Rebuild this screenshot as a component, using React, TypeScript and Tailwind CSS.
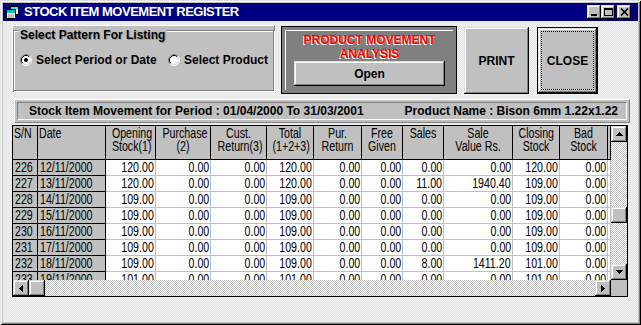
const bevel =
  'shadow-[inset_-1px_-1px_#000,inset_1px_1px_#dfdfdf,inset_-2px_-2px_#808080,inset_2px_2px_#fff]'
const track =
  'bg-[repeating-conic-gradient(#c0c0c0_0_25%,#ffffff_0_50%)] bg-[length:2px_2px]'

// column widths include the 1px right grid line
const COLS = [
  { w: 'w-[25px]', head: ['S/N'], left: true },
  { w: 'w-[68px]', head: ['Date'], left: true },
  { w: 'w-[50px]', head: ['Opening', 'Stock(1)'] },
  { w: 'w-[55px]', head: ['Purchase', '(2)'] },
  { w: 'w-[56px]', head: ['Cust.', 'Return(3)'] },
  { w: 'w-[47px]', head: ['Total', '(1+2+3)'] },
  { w: 'w-[48px]', head: ['Pur.', 'Return'] },
  { w: 'w-[41px]', head: ['Free', 'Given'] },
  { w: 'w-[41px]', head: ['Sales'] },
  { w: 'w-[69px]', head: ['Sale', 'Value Rs.'] },
  { w: 'w-[47px]', head: ['Closing', 'Stock'] },
  { w: 'w-[48px]', head: ['Bad', 'Stock'] },
  { w: 'w-[3px]', head: [] },
]

const ROWS = [
  ['226', '12/11/2000', '120.00', '0.00', '0.00', '120.00', '0.00', '0.00', '0.00', '0.00', '120.00', '0.00'],
  ['227', '13/11/2000', '120.00', '0.00', '0.00', '120.00', '0.00', '0.00', '11.00', '1940.40', '109.00', '0.00'],
  ['228', '14/11/2000', '109.00', '0.00', '0.00', '109.00', '0.00', '0.00', '0.00', '0.00', '109.00', '0.00'],
  ['229', '15/11/2000', '109.00', '0.00', '0.00', '109.00', '0.00', '0.00', '0.00', '0.00', '109.00', '0.00'],
  ['230', '16/11/2000', '109.00', '0.00', '0.00', '109.00', '0.00', '0.00', '0.00', '0.00', '109.00', '0.00'],
  ['231', '17/11/2000', '109.00', '0.00', '0.00', '109.00', '0.00', '0.00', '0.00', '0.00', '109.00', '0.00'],
  ['232', '18/11/2000', '109.00', '0.00', '0.00', '109.00', '0.00', '0.00', '8.00', '1411.20', '101.00', '0.00'],
  ['233', '19/11/2000', '101.00', '0.00', '0.00', '101.00', '0.00', '0.00', '0.00', '0.00', '101.00', '0.00'],
]

function Radio({ checked }: { checked?: boolean }) {
  return (
    <svg width="12" height="12" viewBox="0 0 12 12" className="shrink-0">
      <circle cx="6" cy="6" r="4.5" fill="#fff" />
      <path d="M2.11 9.89A5.5 5.5 0 0 1 9.89 2.11" fill="none" stroke="#808080" />
      <path d="M9.89 2.11A5.5 5.5 0 0 1 2.11 9.89" fill="none" stroke="#fff" />
      <path d="M2.82 9.18A4.5 4.5 0 0 1 9.18 2.82" fill="none" stroke="#000" />
      <path d="M9.18 2.82A4.5 4.5 0 0 1 2.82 9.18" fill="none" stroke="#dfdfdf" />
      {checked && <circle cx="6" cy="6" r="2" fill="#000" />}
    </svg>
  )
}

function Arrow({ dir }: { dir: 'up' | 'down' | 'left' | 'right' }) {
  const rects = {
    up: [[3, 0, 1, 1], [2, 1, 3, 1], [1, 2, 5, 1], [0, 3, 7, 1]],
    down: [[0, 0, 7, 1], [1, 1, 5, 1], [2, 2, 3, 1], [3, 3, 1, 1]],
    left: [[0, 3, 1, 1], [1, 2, 1, 3], [2, 1, 1, 5], [3, 0, 1, 7]],
    right: [[0, 0, 1, 7], [1, 1, 1, 5], [2, 2, 1, 3], [3, 3, 1, 1]],
  }[dir]
  const vertical = dir === 'up' || dir === 'down'
  return (
    <div className={`w-[16px] h-[16px] shrink-0 bg-[#c0c0c0] flex items-center justify-center ${bevel}`}>
      <svg width={vertical ? 7 : 4} height={vertical ? 4 : 7} shapeRendering="crispEdges">
        {rects.map((r, i) => (
          <rect key={i} x={r[0]} y={r[1]} width={r[2]} height={r[3]} fill="#000" />
        ))}
      </svg>
    </div>
  )
}

function TitleButton({ kind }: { kind: 'min' | 'max' | 'close' }) {
  return (
    <div className={`w-[14px] h-[14px] bg-[#c0c0c0] flex items-center justify-center ${bevel}`}>
      <svg width="9" height="8" viewBox="0 0 9 8" shapeRendering="crispEdges">
        {kind === 'min' && <rect x="1" y="6" width="6" height="2" fill="#000" />}
        {kind === 'max' && (
          <>
            <rect x="0" y="0" width="9" height="2" fill="#000" />
            <rect x="0" y="0" width="1" height="8" fill="#000" />
            <rect x="8" y="0" width="1" height="8" fill="#000" />
            <rect x="0" y="7" width="9" height="1" fill="#000" />
          </>
        )}
        {kind === 'close' && (
          <path d="M1 0.5L8 7.5M8 0.5L1 7.5" stroke="#000" strokeWidth="1.6" shapeRendering="auto" />
        )}
      </svg>
    </div>
  )
}

export default function App() {
  return (
    <div className="w-[641px] h-[325px] bg-[#c0c0c0] p-[3px] flex flex-col font-['Liberation_Sans',Arial,sans-serif] text-black shadow-[inset_1px_1px_#dfdfdf,inset_-1px_-1px_#000,inset_2px_2px_#fff,inset_-2px_-2px_#808080] overflow-hidden">
      {/* Title bar */}
      <div className="h-[18px] bg-[#000080] flex items-center pl-[2px] pr-[7px]">
        <svg width="16" height="15" viewBox="0 0 16 15" className="shrink-0">
          <rect x="5.5" y="1.5" width="8" height="8" fill="#fff" stroke="#000" />
          <rect x="1.5" y="4.5" width="9" height="9" fill="#fff" stroke="#000" />
          <rect x="2" y="5" width="8" height="3" fill="#00c0c0" />
          <rect x="6" y="2" width="7" height="2" fill="#00ffff" />
          <path d="M3 10h6M3 12h6" stroke="#808080" />
        </svg>
        <span className="ml-[3px] text-white font-bold text-[13px] leading-[18px] tracking-[-0.5px]">
          STOCK ITEM MOVEMENT REGISTER
        </span>
        <div className="ml-auto flex items-center">
          <TitleButton kind="min" />
          <TitleButton kind="max" />
          <div className="ml-[2px]">
            <TitleButton kind="close" />
          </div>
        </div>
      </div>

      {/* Body */}
      <div className="flex-1 bg-[repeating-conic-gradient(#e5e5e5_0_25%,#f2f2f2_0_50%)] bg-[length:2px_2px] flex flex-col">
        {/* Top controls */}
        <div className="flex items-start pl-[9px] mt-[4px] h-[69px]">
          {/* Group box */}
          <div className="w-[263px] h-[67px] bg-[#c0c0c0] border-t border-l border-white border-r border-b border-r-[#808080] border-b-[#808080]">
            <div className="mt-[4px] h-[61px] border border-[#808080] shadow-[inset_1px_1px_#fff,1px_1px_#fff]">
              <div className="-mt-[3px] ml-[4px] px-[2px] w-fit bg-[#c0c0c0] text-[12px] font-bold leading-[14px] [text-shadow:1px_1px_0_#9a9a9a]">
                Select Pattern For Listing
              </div>
              <div className="mt-[11px] h-[14px] flex items-center pl-[6px] text-[12px] font-bold">
                <div className="w-[148px] flex items-center gap-[4px]">
                  <Radio checked />
                  <span>Select Period or Date</span>
                </div>
                <div className="flex items-center gap-[4px]">
                  <Radio />
                  <span>Select Product</span>
                </div>
              </div>
            </div>
          </div>

          {/* Product movement panel */}
          <div className="ml-[6px] mt-[1px] w-[176px] h-[68px] bg-[#808080] border border-black p-[3px]">
            <div className="h-full border-t border-l border-white flex flex-col items-center">
              <div className="mt-[2px] text-[#ff0000] font-bold text-[12px] leading-[14px] text-center [text-shadow:-1px_1px_0_#fff]">
                PRODUCT MOVEMENT
                <br />
                ANALYSIS
              </div>
              <div className={`w-[151px] h-[25px] bg-[#c0c0c0] flex items-center justify-center text-[12px] font-bold ${bevel}`}>
                Open
              </div>
            </div>
          </div>

          {/* Print */}
          <div className={`ml-[7px] mt-[2px] w-[65px] h-[67px] bg-[#c0c0c0] flex items-center justify-center text-[12px] font-bold ${bevel}`}>
            PRINT
          </div>

          {/* Close (default button) */}
          <div className="ml-[8px] mt-[2px] w-[61px] h-[67px] border border-black">
            <div className={`w-full h-full bg-[#c0c0c0] p-[3px] flex ${bevel}`}>
              <div className="flex-1 border border-dotted border-black flex items-center justify-center text-[12px] font-bold">
                CLOSE
              </div>
            </div>
          </div>
        </div>

        {/* Info strip */}
        <div className="ml-[11px] mt-[5px] w-[616px] h-[24px] bg-[#c0c0c0] border-t border-l border-white border-r border-b border-r-[#808080] border-b-[#808080] p-[2px]">
          <div className="h-full border-t border-l border-[#808080] border-r border-b border-r-white border-b-white flex items-center justify-between pl-[11px] pr-[8px] text-[12px] font-bold">
            <span>Stock Item Movement for Period : 01/04/2000 To 31/03/2001</span>
            <span>Product Name : Bison 6mm 1.22x1.22</span>
          </div>
        </div>

        {/* Grid */}
        <div className="ml-[9px] mt-[2px] w-[616px] h-[172px] border border-black bg-white flex text-[14px]">
          <div className="w-[598px] flex flex-col">
            {/* Header */}
            <div className="flex h-[34px] shrink-0">
              {COLS.map((c, i) => (
                <div
                  key={i}
                  className={`${c.w} shrink-0 h-full bg-[#c0c0c0] border-r border-b border-black leading-[13px] pt-[1px] overflow-hidden whitespace-nowrap ${c.left ? 'text-left pl-[1px]' : 'text-center'}`}
                >
                  {c.head.map((h) => (
                    <div key={h} className={`scale-x-[0.76] ${c.left ? 'origin-left' : 'origin-center'}`}>
                      {h}
                    </div>
                  ))}
                </div>
              ))}
            </div>
            {/* Rows */}
            <div className="h-[120px] overflow-hidden shrink-0">
              {ROWS.map((row) => (
                <div key={row[0]} className="flex h-[16px]">
                  {COLS.map((c, i) => (
                    <div
                      key={i}
                      className={`${c.w} shrink-0 h-full leading-[15px] border-r border-b overflow-hidden whitespace-nowrap ${
                        i < 2
                          ? 'bg-[#c0c0c0] border-black text-left pl-[2px]'
                          : 'bg-white border-[#c0c0c0] text-right pr-[1px]'
                      }`}
                    >
                      {row[i] && (
                        <span className={`inline-block scale-x-[0.76] ${i < 2 ? 'origin-left' : 'origin-right'}`}>
                          {row[i]}
                        </span>
                      )}
                    </div>
                  ))}
                </div>
              ))}
            </div>
            {/* Horizontal scrollbar */}
            <div className="flex h-[16px] shrink-0">
              <Arrow dir="left" />
              <div className={`w-[16px] h-[16px] shrink-0 bg-[#c0c0c0] ${bevel}`} />
              <div className={`flex-1 ${track}`} />
              <Arrow dir="right" />
            </div>
          </div>

          {/* Vertical scrollbar */}
          <div className="w-[16px] flex flex-col">
            <div className="h-[154px] flex flex-col">
              <Arrow dir="up" />
              <div className={`h-[65px] ${track}`} />
              <div className={`w-[16px] h-[16px] shrink-0 bg-[#c0c0c0] ${bevel}`} />
              <div className={`flex-1 ${track}`} />
              <Arrow dir="down" />
            </div>
            <div className="h-[16px] bg-[#c0c0c0]" />
          </div>
        </div>
      </div>
    </div>
  )
}
